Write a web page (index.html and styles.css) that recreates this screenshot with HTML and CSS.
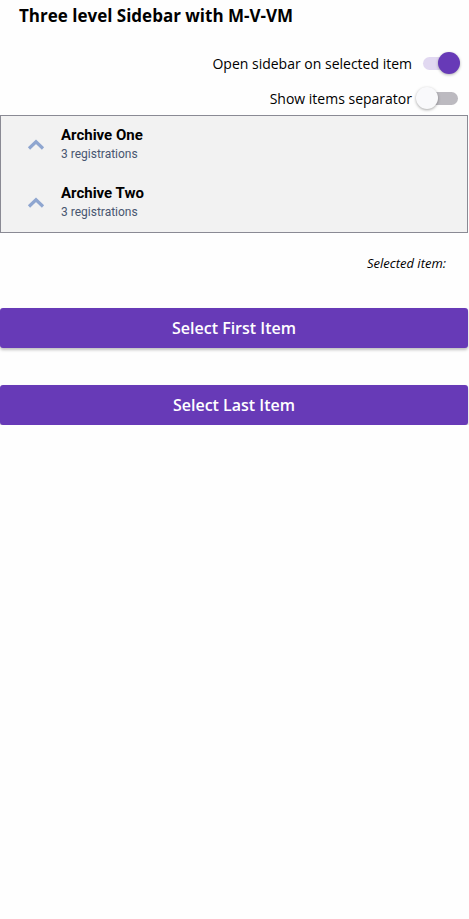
FILE: index.html
```html
<!DOCTYPE html>
<html>
<head>
<meta charset="utf-8">
<link rel="stylesheet" href="styles.css">
</head>
<body>
<div class="page">
  <h1 class="title">Three level Sidebar with M-V-VM</h1>
  <div class="options">
    <label class="option">
      <span class="option-label">Open sidebar on selected item</span>
      <span class="switch on"><span class="track"></span><span class="thumb"></span></span>
    </label>
    <label class="option">
      <span class="option-label">Show items separator</span>
      <span class="switch"><span class="track"></span><span class="thumb"></span></span>
    </label>
  </div>
  <div class="sidebar">
    <div class="item">
      <svg class="chevron" width="18" height="12" viewBox="0 0 18 12"><path d="M2 9.5 L9 2.8 L16 9.5" fill="none" stroke="#8fa6d0" stroke-width="3.2"/></svg>
      <div class="item-text">
        <div class="item-title">Archive One</div>
        <div class="item-sub">3 registrations</div>
      </div>
    </div>
    <div class="item">
      <svg class="chevron" width="18" height="12" viewBox="0 0 18 12"><path d="M2 9.5 L9 2.8 L16 9.5" fill="none" stroke="#8fa6d0" stroke-width="3.2"/></svg>
      <div class="item-text">
        <div class="item-title">Archive Two</div>
        <div class="item-sub">3 registrations</div>
      </div>
    </div>
  </div>
  <div class="selected">Selected item:</div>
  <div class="actions">
    <button class="btn">Select First Item</button>
    <button class="btn">Select Last Item</button>
  </div>
</div>
</body>
</html>
```
FILE: styles.css
```css
html, body {
  margin: 0;
  padding: 0;
  background: #fefefe;
}
.page {
  width: 468px;
  font-family: "Open Sans", "Noto Sans", sans-serif;
  color: #000;
}
.title {
  margin: 0;
  padding: 4px 0 0 19px;
  font-size: 17px;
  font-weight: 700;
  line-height: 23px;
  height: 51px;
  box-sizing: border-box;
}
.options {
  display: flex;
  flex-direction: column;
  align-items: flex-end;
  padding-right: 10px;
  gap: 11px;
}
.option {
  display: flex;
  align-items: center;
  gap: 10px;
  height: 24px;
}
.option-label {
  font-size: 14px;
  line-height: 19px;
}
.switch {
  position: relative;
  width: 36px;
  height: 24px;
  display: block;
}
.switch .track {
  position: absolute;
  left: 1px;
  right: 0;
  top: 6px;
  height: 13px;
  border-radius: 7px;
  background: #bcbac0;
}
.switch .thumb {
  position: absolute;
  top: 1px;
  left: -6px;
  width: 22px;
  height: 22px;
  border-radius: 50%;
  background: #f9f9fb;
  box-shadow: 0 1px 3px rgba(0,0,0,0.35);
}
.switch.on .track {
  background: #e1d8f1;
}
.switch.on .thumb {
  left: 16px;
  background: #673ab7;
  box-shadow: 0 1px 3px rgba(0,0,0,0.3);
}
.sidebar {
  margin-top: 5px;
  border: 1px solid #8a8a94;
  background: #f2f2f2;
  padding: 0;
}
.item {
  display: flex;
  align-items: center;
  height: 58px;
  padding-left: 26px;
  box-sizing: border-box;
}
.chevron {
  margin-top: -1px;
  flex: none;
}
.item-text {
  margin-left: 16px;
  font-family: Roboto, sans-serif;
  margin-top: -1px;
}
.item-title {
  font-size: 15px;
  font-weight: 700;
  line-height: 19px;
}
.item-sub {
  font-size: 12px;
  color: #485670;
  line-height: 18px;
}
.selected {
  text-align: right;
  font-size: 13px;
  font-style: italic;
  padding-right: 22px;
  margin-top: 21px;
  line-height: 18px;
}
.actions {
  display: flex;
  flex-direction: column;
  gap: 37px;
  margin-top: 36px;
}
.btn {
  display: block;
  width: 100%;
  height: 40px;
  border: none;
  border-radius: 3px;
  background: #673ab7;
  color: #fff;
  font-family: "Open Sans", "Noto Sans", sans-serif;
  font-size: 16px;
  font-weight: 600;
  box-shadow: 0 2px 3px rgba(0,0,0,0.25);
}
```
